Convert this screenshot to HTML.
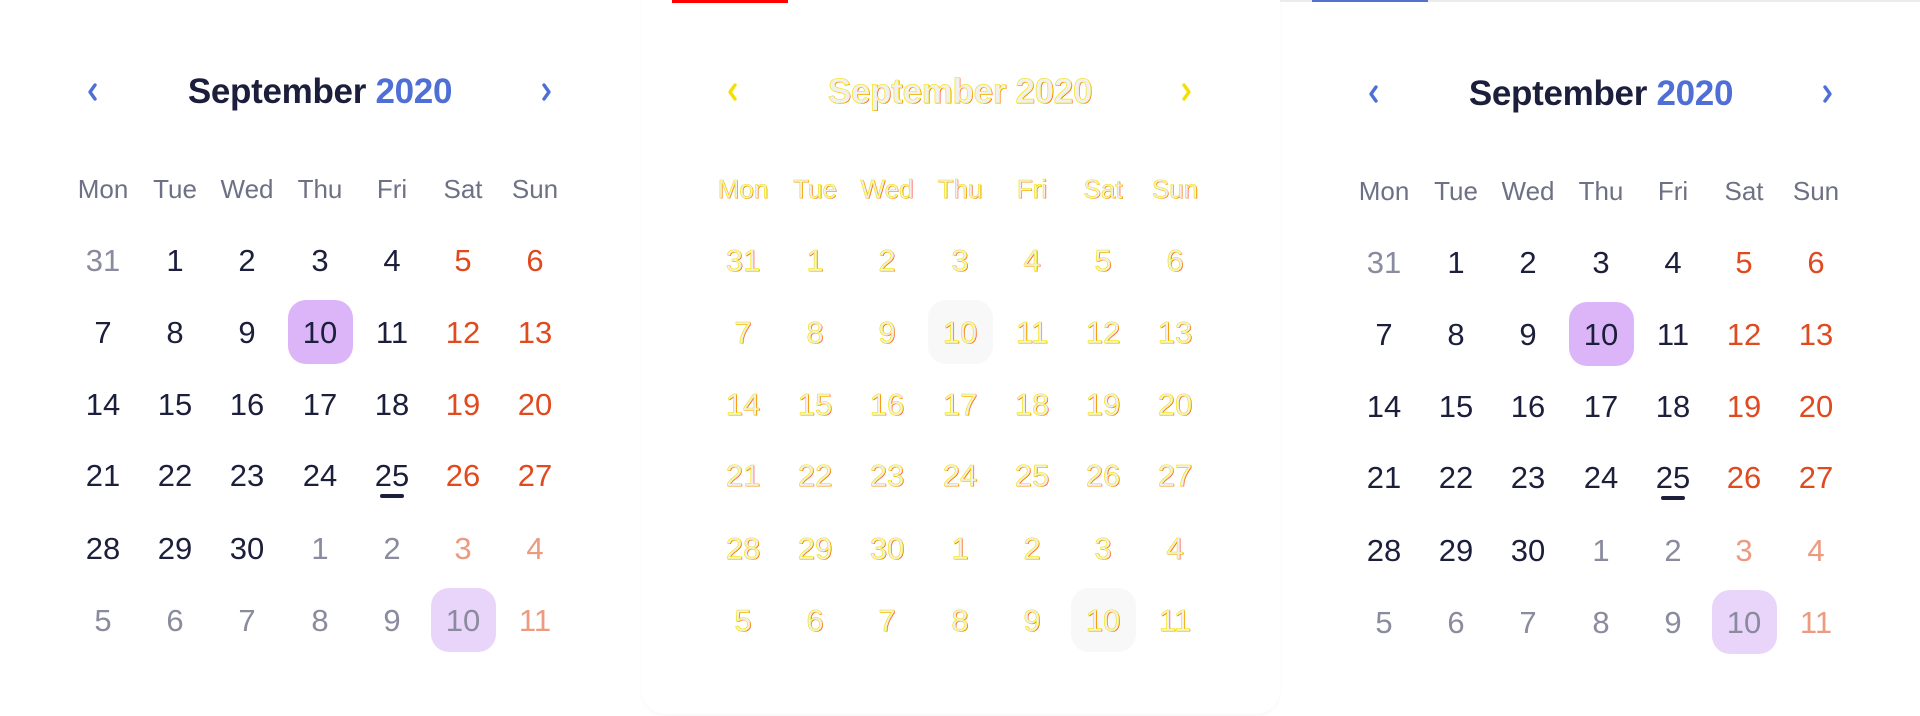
<!DOCTYPE html>
<html><head><style>
*{margin:0;padding:0;box-sizing:border-box}
body{width:1920px;height:714px;background:#fff;position:relative;overflow:hidden;font-family:"Liberation Sans",sans-serif}
.p{position:absolute;top:0;width:640px;height:714px}
.t{position:absolute;top:72px;left:0;width:640px;text-align:center;font-weight:bold;font-size:35px;color:#1c1f3b;letter-spacing:-0.3px}
.t span{color:#4f6fd6}
.ar{position:absolute;top:82px}
.c{position:absolute;width:72px;text-align:center;transform:translateX(-36px)}
.w{font-size:26px;color:#6e7185}
.d{font-size:31px;color:#1c1f3b}
.g{color:#8a8b9e}.o{color:#e04a1f}.lo{color:#ec9a80}
.hl{position:absolute;width:65px;height:64px;border-radius:18px}
.ul{position:absolute;width:24px;height:4px;border-radius:2px;background:#1c1f3b}
.ghost .t,.ghost .c{color:#f0f0f0 !important;-webkit-text-stroke:0.6px #f3e000;text-shadow:0.7px 0.7px 0 rgba(255,0,0,0.8)}
.ghost .t span{color:#f0f0f0}
</style></head><body>
<div style="position:absolute;left:672px;top:0;width:116px;height:3px;background:#f00"></div>
<div style="position:absolute;left:1280px;top:0;width:640px;height:2px;background:#ebebeb"></div>
<div style="position:absolute;left:1312px;top:0;width:116px;height:2px;background:#5470d0"></div>
<div style="position:absolute;left:642px;top:0;width:638px;height:714px;border-radius:0 0 24px 24px;box-shadow:0 2px 4px rgba(0,0,0,0.03)"></div>
<div id="panels"></div>
<script>
const cols=[103,175,247,320,392,463,535];
const rows=[261,333,405,476,549,621];
const data=[
[["31","g"],["1"],["2"],["3"],["4"],["5","o"],["6","o"]],
[["7"],["8"],["9"],["10"],["11"],["12","o"],["13","o"]],
[["14"],["15"],["16"],["17"],["18"],["19","o"],["20","o"]],
[["21"],["22"],["23"],["24"],["25"],["26","o"],["27","o"]],
[["28"],["29"],["30"],["1","g"],["2","g"],["3","lo"],["4","lo"]],
[["5","g"],["6","g"],["7","g"],["8","g"],["9","g"],["10","g"],["11","lo"]]];
const wd=["Mon","Tue","Wed","Thu","Fri","Sat","Sun"];
let html="";
[[0,0,""],[640,0,"ghost"],[1281,2,""]].forEach(([x,dy,cls])=>{
 const ghost=cls=="ghost";
 let h=`<div class="p ${cls}" style="left:${x}px;top:${dy}px">`;
 h+=`<div class="t">September <span>2020</span></div>`;
 const ac=ghost?"#f3e000":"#4f6fd6";
 h+=`<svg class="ar" style="left:85px" width="14" height="20" viewBox="0 0 14 20"><path d="M10 3 L5 10 L10 17" fill="none" stroke="${ac}" stroke-width="3.4" stroke-linecap="round" stroke-linejoin="round"/></svg>`;
 h+=`<svg class="ar" style="left:540px" width="14" height="20" viewBox="0 0 14 20"><path d="M4 3 L9 10 L4 17" fill="none" stroke="${ac}" stroke-width="3.4" stroke-linecap="round" stroke-linejoin="round"/></svg>`;
 h+=`<div class="hl" style="left:288px;top:300px;background:${ghost?'#f8f8f8':'#dbb5f7'}"></div>`;
 h+=`<div class="hl" style="left:431px;top:588px;background:${ghost?'#f8f8f8':'#ead5fa'}"></div>`;
 if(!ghost) h+=`<div class="ul" style="left:380px;top:494px"></div>`;
 wd.forEach((w,i)=>{h+=`<div class="c w" style="left:${cols[i]}px;top:174px">${w}</div>`});
 data.forEach((r,ri)=>r.forEach((c,ci)=>{h+=`<div class="c d ${c[1]||''}" style="left:${cols[ci]}px;top:${rows[ri]-18}px">${c[0]}</div>`}));
 h+="</div>";html+=h;
});
document.getElementById("panels").innerHTML=html;
</script>
</body></html>
